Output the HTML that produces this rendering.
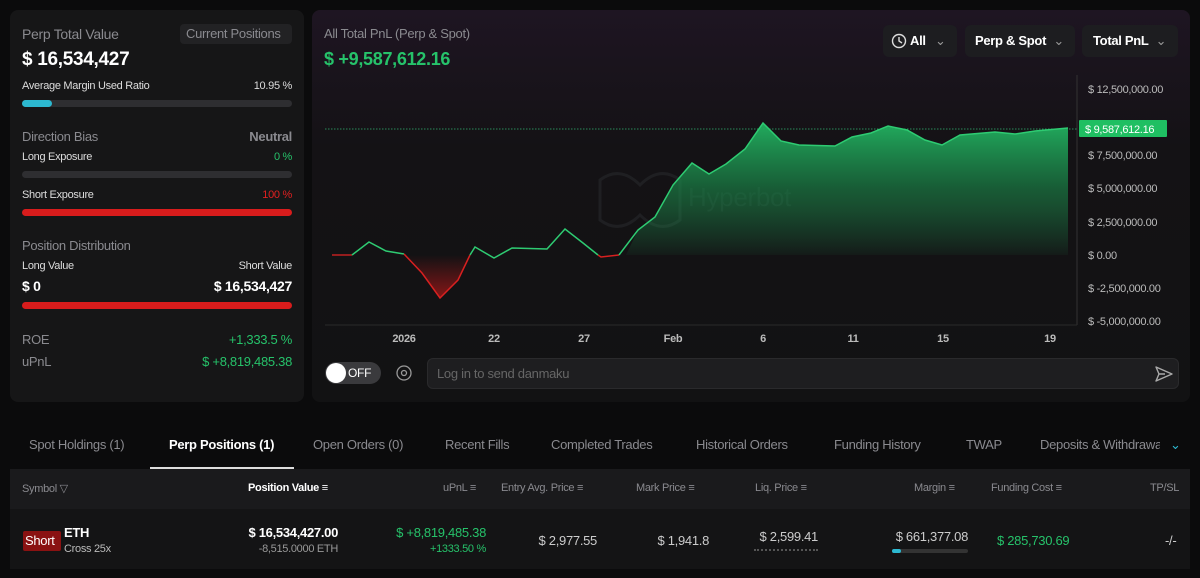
<!DOCTYPE html>
<html><head><meta charset="utf-8"><style>
*{margin:0;padding:0;box-sizing:border-box}
body{width:1200px;height:578px;background:#0b0b0c;font-family:"Liberation Sans",sans-serif;color:#fff;position:relative;overflow:hidden;letter-spacing:-0.3px}
.a{position:absolute;white-space:nowrap}
.g{color:#8a8a8f}.gr{color:#26c26a}.rd{color:#e02020}
.bar{position:absolute;height:7px;border-radius:4px;background:#2e2e31}
</style></head><body>
<div class="a" style="left:10px;top:10px;width:294px;height:392px;background:#161617;border-radius:8px"></div>
<div class="a g" style="left:22px;top:26px;font-size:14px">Perp Total Value</div>
<div class="a" style="left:180px;top:24px;width:112px;height:20px;background:#222224;border-radius:4px"></div>
<div class="a g" style="left:186px;top:26px;font-size:13px">Current Positions</div>
<div class="a" style="left:22px;top:49px;font-size:19px;font-weight:bold">$ 16,534,427</div>
<div class="a" style="left:22px;top:80px;font-size:11px;color:#ddd">Average Margin Used Ratio</div>
<div class="a" style="right:908px;top:80px;font-size:11px;color:#ddd">10.95 %</div>
<div class="bar" style="left:22px;top:100px;width:270px"></div>
<div class="bar" style="left:22px;top:100px;width:30px;background:#2cb8d0"></div>
<div class="a g" style="left:22px;top:129px;font-size:13px">Direction Bias</div>
<div class="a g" style="right:908px;top:129px;font-size:13px;font-weight:bold">Neutral</div>
<div class="a" style="left:22px;top:151px;font-size:11px;color:#ddd">Long Exposure</div>
<div class="a gr" style="right:908px;top:151px;font-size:11px">0 %</div>
<div class="bar" style="left:22px;top:171px;width:270px"></div>
<div class="a" style="left:22px;top:189px;font-size:11px;color:#ddd">Short Exposure</div>
<div class="a rd" style="right:908px;top:189px;font-size:11px">100 %</div>
<div class="bar" style="left:22px;top:209px;width:270px;background:#d81c1c"></div>
<div class="a g" style="left:22px;top:238px;font-size:13px">Position Distribution</div>
<div class="a" style="left:22px;top:260px;font-size:11px;color:#ddd">Long Value</div>
<div class="a" style="right:908px;top:260px;font-size:11px;color:#ddd">Short Value</div>
<div class="a" style="left:22px;top:278px;font-size:14px;font-weight:bold">$ 0</div>
<div class="a" style="right:908px;top:278px;font-size:14px;font-weight:bold">$ 16,534,427</div>
<div class="bar" style="left:22px;top:302px;width:270px;background:#d81c1c"></div>
<div class="a g" style="left:22px;top:332px;font-size:13px">ROE</div>
<div class="a gr" style="right:908px;top:332px;font-size:13px">+1,333.5 %</div>
<div class="a g" style="left:22px;top:354px;font-size:13px">uPnL</div>
<div class="a gr" style="right:908px;top:354px;font-size:13px">$ +8,819,485.38</div>
<div class="a" style="left:312px;top:10px;width:878px;height:392px;background:linear-gradient(180deg,#1e1522 0%,#141215 35%,#121213 100%);border-radius:8px"></div>
<div class="a g" style="left:324px;top:26px;font-size:13px">All Total PnL (Perp &amp; Spot)</div>
<div class="a gr" style="left:324px;top:49px;font-size:18px;font-weight:bold">$ +9,587,612.16</div>
<div class="a" style="left:883px;top:25px;width:74px;height:32px;background:#1d1d20;border-radius:6px"></div>
<div class="a" style="left:965px;top:25px;width:110px;height:32px;background:#1d1d20;border-radius:6px"></div>
<div class="a" style="left:1082px;top:25px;width:96px;height:32px;background:#1d1d20;border-radius:6px"></div>
<svg class="a" style="left:891px;top:33px" width="16" height="16" viewBox="0 0 16 16"><circle cx="8" cy="8" r="6.5" fill="none" stroke="#ddd" stroke-width="1.4"/><path d="M8 4v4l3 2" stroke="#ddd" stroke-width="1.4" fill="none"/></svg>
<div class="a" style="left:910px;top:33px;font-size:13px;font-weight:bold">All <span style="color:#999;font-weight:normal;margin-left:6px">&#8964;</span></div>
<div class="a" style="left:975px;top:33px;font-size:13px;font-weight:bold">Perp &amp; Spot <span style="color:#999;font-weight:normal;margin-left:4px">&#8964;</span></div>
<div class="a" style="left:1093px;top:33px;font-size:13px;font-weight:bold">Total PnL <span style="color:#999;font-weight:normal;margin-left:4px">&#8964;</span></div>
<svg class="a" style="left:0;top:0" width="1200" height="400">
<defs><linearGradient id="gf" x1="0" y1="120" x2="0" y2="262" gradientUnits="userSpaceOnUse"><stop offset="0" stop-color="#22b060" stop-opacity="1"/><stop offset="0.5" stop-color="#1a8a4a" stop-opacity=".6"/><stop offset="1" stop-color="#22a85a" stop-opacity="0"/></linearGradient>
<linearGradient id="rf" x1="0" y1="255" x2="0" y2="300" gradientUnits="userSpaceOnUse"><stop offset="0" stop-color="#c01818" stop-opacity="0"/><stop offset="1" stop-color="#c01818" stop-opacity=".7"/></linearGradient></defs>
<line x1="1077" y1="75" x2="1077" y2="325" stroke="#333" stroke-width="1"/>
<line x1="325" y1="325" x2="1077" y2="325" stroke="#2a2a2a"/>
<g fill="none" stroke="#1f1f22" stroke-width="3"><path d="M600,180 q20,-15 40,5 q20,-20 40,-5 v40 q-20,15 -40,-5 q-20,20 -40,5z"/></g>
<text x="688" y="206" fill="#1f1f22" font-size="26" font-family="Liberation Sans">Hyperbot</text>
<line x1="325" y1="129" x2="1077" y2="129" stroke="#2a8a5a" stroke-dasharray="1.5 1.5"/>
<path d="M404,255 L422,273 440,298 458,280 470,255 Z" fill="url(#rf)"/>
<path d="M626,255 L638,230 655,217 673,185 692,163 709,174 726,164 745,149 763,123 781,141 799,145 835,146 852,137 871,133 888,126 907,130 925,140 942,145 960,135 995,132 1015,134 1035,131 1068,128 L1068,255 Z" fill="url(#gf)"/>
<polyline points="332,255 352,255" fill="none" stroke="#c02020" stroke-width="1.5"/>
<polyline points="352,255 369,242 386,251 404,254" fill="none" stroke="#2ecb72" stroke-width="1.5"/>
<polyline points="404,254 422,273 440,298 458,280 470,255" fill="none" stroke="#d82020" stroke-width="1.5"/>
<polyline points="470,255 475,247 494,258 512,248 547,249 565,229 583,243 598,255" fill="none" stroke="#2ecb72" stroke-width="1.5"/>
<polyline points="598,255 601,257 619,255" fill="none" stroke="#d82020" stroke-width="1.5"/>
<polyline points="619,255 638,230 655,217 673,185 692,163 709,174 726,164 745,149 763,123 781,141 799,145 835,146 852,137 871,133 888,126 907,130 925,140 942,145 960,135 995,132 1015,134 1035,131 1068,128" fill="none" stroke="#2ecb72" stroke-width="1.5"/>
<g fill="#bbb" font-size="11" font-family="Liberation Sans">
<text x="1088" y="93">$ 12,500,000.00</text><text x="1088" y="159">$ 7,500,000.00</text><text x="1088" y="192">$ 5,000,000.00</text><text x="1088" y="226">$ 2,500,000.00</text><text x="1088" y="259">$ 0.00</text><text x="1088" y="292">$ -2,500,000.00</text><text x="1088" y="325">$ -5,000,000.00</text>
</g>
<rect x="1079" y="120" width="88" height="17" fill="#1fbf62" rx="1"/>
<text x="1085" y="133" fill="#fff" font-size="11" font-family="Liberation Sans">$ 9,587,612.16</text>
<g fill="#bbb" font-size="11" font-family="Liberation Sans" font-weight="bold" text-anchor="middle">
<text x="404" y="342">2026</text><text x="494" y="342">22</text><text x="584" y="342">27</text><text x="673" y="342">Feb</text><text x="763" y="342">6</text><text x="853" y="342">11</text><text x="943" y="342">15</text><text x="1050" y="342">19</text></g>
</svg>
<div class="a" style="left:325px;top:362px;width:56px;height:22px;background:#3a3a3d;border-radius:11px"></div>
<div class="a" style="left:326px;top:363px;width:20px;height:20px;background:#fff;border-radius:50%"></div>
<div class="a" style="left:348px;top:366px;font-size:12px">OFF</div>
<svg class="a" style="left:395px;top:364px" width="18" height="18" viewBox="0 0 18 18"><circle cx="9" cy="9" r="7" fill="none" stroke="#999" stroke-width="1.3"/><circle cx="9" cy="9" r="2.5" fill="none" stroke="#999" stroke-width="1.3"/></svg>
<div class="a" style="left:427px;top:358px;width:752px;height:31px;background:#1e1e20;border:1px solid #2a2a2c;border-radius:6px"></div>
<div class="a" style="left:437px;top:366px;font-size:13px;color:#666">Log in to send danmaku</div>
<svg class="a" style="left:1154px;top:364px" width="20" height="20" viewBox="0 0 20 20"><path d="M2 3l16 7-16 7 3-7z M5 10h6" fill="none" stroke="#aaa" stroke-width="1.4" stroke-linejoin="round"/></svg>
<div class="a" style="left:0;top:437px;font-size:13px;color:#8a8a8f;width:1200px;height:20px">
<span class="a" style="left:29px">Spot Holdings (1)</span>
<span class="a" style="left:169px;color:#fff;font-weight:bold">Perp Positions (1)</span>
<span class="a" style="left:313px">Open Orders (0)</span>
<span class="a" style="left:445px">Recent Fills</span>
<span class="a" style="left:551px">Completed Trades</span>
<span class="a" style="left:696px">Historical Orders</span>
<span class="a" style="left:834px">Funding History</span>
<span class="a" style="left:966px">TWAP</span>
<span class="a" style="left:1040px;width:120px;overflow:hidden">Deposits &amp; Withdrawals</span>
<span class="a" style="left:1170px;color:#2cb8d0">&#8964;</span>
</div>
<div class="a" style="left:150px;top:467px;width:144px;height:2px;background:#ddd"></div>
<div class="a" style="left:10px;top:469px;width:1180px;height:40px;background:#1a1a1c"></div>
<div class="a" style="left:10px;top:509px;width:1180px;height:60px;background:#141415"></div>
<div class="a" style="left:0;top:482px;font-size:11px;color:#8a8a8f;width:1200px">
<span class="a" style="left:22px">Symbol ▽</span>
<span class="a" style="left:248px;color:#fff;font-weight:bold">Position Value ≡</span>
<span class="a" style="left:443px">uPnL ≡</span>
<span class="a" style="left:501px">Entry Avg. Price ≡</span>
<span class="a" style="left:636px">Mark Price ≡</span>
<span class="a" style="left:755px">Liq. Price ≡</span>
<span class="a" style="left:914px">Margin ≡</span>
<span class="a" style="left:991px">Funding Cost ≡</span>
<span class="a" style="left:1150px">TP/SL</span>
</div>
<div class="a" style="left:23px;top:531px;width:38px;height:20px;background:#8a1212;border-radius:2px;font-size:13px;padding:2px 2px">Short</div>
<div class="a" style="left:64px;top:525px;font-size:13px;font-weight:bold">ETH</div>
<div class="a" style="left:64px;top:543px;font-size:11px;color:#bbb">Cross 25x</div>
<div class="a" style="right:862px;top:525px;font-size:13px;font-weight:bold">$ 16,534,427.00</div>
<div class="a" style="right:862px;top:543px;font-size:11px;color:#999">-8,515.0000 ETH</div>
<div class="a gr" style="right:714px;top:525px;font-size:13px">$ +8,819,485.38</div>
<div class="a gr" style="right:714px;top:543px;font-size:11px">+1333.50 %</div>
<div class="a" style="right:603px;top:533px;font-size:13px;color:#ccc">$ 2,977.55</div>
<div class="a" style="right:491px;top:533px;font-size:13px;color:#ccc">$ 1,941.8</div>
<div class="a" style="right:382px;top:529px;font-size:13px;color:#ccc">$ 2,599.41</div>
<div class="a" style="left:754px;top:549px;width:64px;border-top:2px dotted #555"></div>
<div class="a" style="right:232px;top:529px;font-size:13px;color:#ccc">$ 661,377.08</div>
<div class="a" style="left:892px;top:549px;width:76px;height:4px;background:#333;border-radius:2px"></div>
<div class="a" style="left:892px;top:549px;width:9px;height:4px;background:#2cb8d0;border-radius:2px"></div>
<div class="a gr" style="left:997px;top:533px;font-size:13px">$ 285,730.69</div>
<div class="a" style="left:1165px;top:533px;font-size:13px;color:#ccc">-/-</div>
</body></html>
